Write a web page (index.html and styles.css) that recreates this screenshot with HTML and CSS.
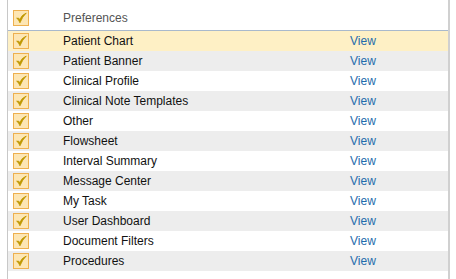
FILE: index.html
```html
<!DOCTYPE html>
<html>
<head>
<meta charset="utf-8">
<link rel="stylesheet" href="styles.css">
</head>
<body>
<div class="panel">
  <div class="head">
    <span class="cb"><svg viewBox="0 0 16 16"><path d="M3 8.2 Q5.5 9.5 6.8 13.5 Q9.5 6.5 14 2.3 Q8.6 4.6 6.8 9.6 Q5.4 7.7 3 8.2 Z" /></svg></span>
    <span class="head-label">Preferences</span>
  </div>
  <div class="row sel"><span class="cb"><svg viewBox="0 0 16 16"><path d="M3 8.2 Q5.5 9.5 6.8 13.5 Q9.5 6.5 14 2.3 Q8.6 4.6 6.8 9.6 Q5.4 7.7 3 8.2 Z" /></svg></span><span class="label">Patient Chart</span><a class="view">View</a></div>
  <div class="row alt"><span class="cb"><svg viewBox="0 0 16 16"><path d="M3 8.2 Q5.5 9.5 6.8 13.5 Q9.5 6.5 14 2.3 Q8.6 4.6 6.8 9.6 Q5.4 7.7 3 8.2 Z" /></svg></span><span class="label">Patient Banner</span><a class="view">View</a></div>
  <div class="row"><span class="cb"><svg viewBox="0 0 16 16"><path d="M3 8.2 Q5.5 9.5 6.8 13.5 Q9.5 6.5 14 2.3 Q8.6 4.6 6.8 9.6 Q5.4 7.7 3 8.2 Z" /></svg></span><span class="label">Clinical Profile</span><a class="view">View</a></div>
  <div class="row alt"><span class="cb"><svg viewBox="0 0 16 16"><path d="M3 8.2 Q5.5 9.5 6.8 13.5 Q9.5 6.5 14 2.3 Q8.6 4.6 6.8 9.6 Q5.4 7.7 3 8.2 Z" /></svg></span><span class="label">Clinical Note Templates</span><a class="view">View</a></div>
  <div class="row"><span class="cb"><svg viewBox="0 0 16 16"><path d="M3 8.2 Q5.5 9.5 6.8 13.5 Q9.5 6.5 14 2.3 Q8.6 4.6 6.8 9.6 Q5.4 7.7 3 8.2 Z" /></svg></span><span class="label">Other</span><a class="view">View</a></div>
  <div class="row alt"><span class="cb"><svg viewBox="0 0 16 16"><path d="M3 8.2 Q5.5 9.5 6.8 13.5 Q9.5 6.5 14 2.3 Q8.6 4.6 6.8 9.6 Q5.4 7.7 3 8.2 Z" /></svg></span><span class="label">Flowsheet</span><a class="view">View</a></div>
  <div class="row"><span class="cb"><svg viewBox="0 0 16 16"><path d="M3 8.2 Q5.5 9.5 6.8 13.5 Q9.5 6.5 14 2.3 Q8.6 4.6 6.8 9.6 Q5.4 7.7 3 8.2 Z" /></svg></span><span class="label">Interval Summary</span><a class="view">View</a></div>
  <div class="row alt"><span class="cb"><svg viewBox="0 0 16 16"><path d="M3 8.2 Q5.5 9.5 6.8 13.5 Q9.5 6.5 14 2.3 Q8.6 4.6 6.8 9.6 Q5.4 7.7 3 8.2 Z" /></svg></span><span class="label">Message Center</span><a class="view">View</a></div>
  <div class="row"><span class="cb"><svg viewBox="0 0 16 16"><path d="M3 8.2 Q5.5 9.5 6.8 13.5 Q9.5 6.5 14 2.3 Q8.6 4.6 6.8 9.6 Q5.4 7.7 3 8.2 Z" /></svg></span><span class="label">My Task</span><a class="view">View</a></div>
  <div class="row alt"><span class="cb"><svg viewBox="0 0 16 16"><path d="M3 8.2 Q5.5 9.5 6.8 13.5 Q9.5 6.5 14 2.3 Q8.6 4.6 6.8 9.6 Q5.4 7.7 3 8.2 Z" /></svg></span><span class="label">User Dashboard</span><a class="view">View</a></div>
  <div class="row"><span class="cb"><svg viewBox="0 0 16 16"><path d="M3 8.2 Q5.5 9.5 6.8 13.5 Q9.5 6.5 14 2.3 Q8.6 4.6 6.8 9.6 Q5.4 7.7 3 8.2 Z" /></svg></span><span class="label">Document Filters</span><a class="view">View</a></div>
  <div class="row alt"><span class="cb"><svg viewBox="0 0 16 16"><path d="M3 8.2 Q5.5 9.5 6.8 13.5 Q9.5 6.5 14 2.3 Q8.6 4.6 6.8 9.6 Q5.4 7.7 3 8.2 Z" /></svg></span><span class="label">Procedures</span><a class="view">View</a></div>
</div>
</body>
</html>
```
FILE: styles.css
```css
html, body {
  margin: 0;
  padding: 0;
  background: #fff;
}
body {
  font-family: "Liberation Sans", Arial, sans-serif;
  font-size: 12px;
}
.panel {
  margin-left: 7px;
  width: 440px;
  height: 279px;
  border-left: 1px solid #c8c8c8;
  border-right: 2px solid #d0d0d0;
}
.head {
  height: 30px;
  border-bottom: 1px solid #a9b9cc;
  display: grid;
  grid-template-columns: 55px 1fr;
  align-items: center;
}
.head .cb {
  margin-top: 6px;
}
.head-label {
  color: #555;
  margin-top: 6px;
}
.row {
  height: 20px;
  display: grid;
  grid-template-columns: 55px 287px 1fr;
  align-items: center;
  color: #111;
}
.row.alt {
  background: #ededed;
}
.row.sel {
  background: #fef0c5;
}
.cb {
  width: 14px;
  height: 14px;
  margin-left: 5px;
  border: 1px solid #eeb04f;
  background: #fde6b4;
  display: block;
}
.cb svg {
  width: 14px;
  height: 14px;
  display: block;
}
.cb path {
  fill: #c09800;
  stroke: #c09800;
  stroke-width: 0.9;
  stroke-linejoin: round;
}
.view {
  color: #1f6cac;
}
```
